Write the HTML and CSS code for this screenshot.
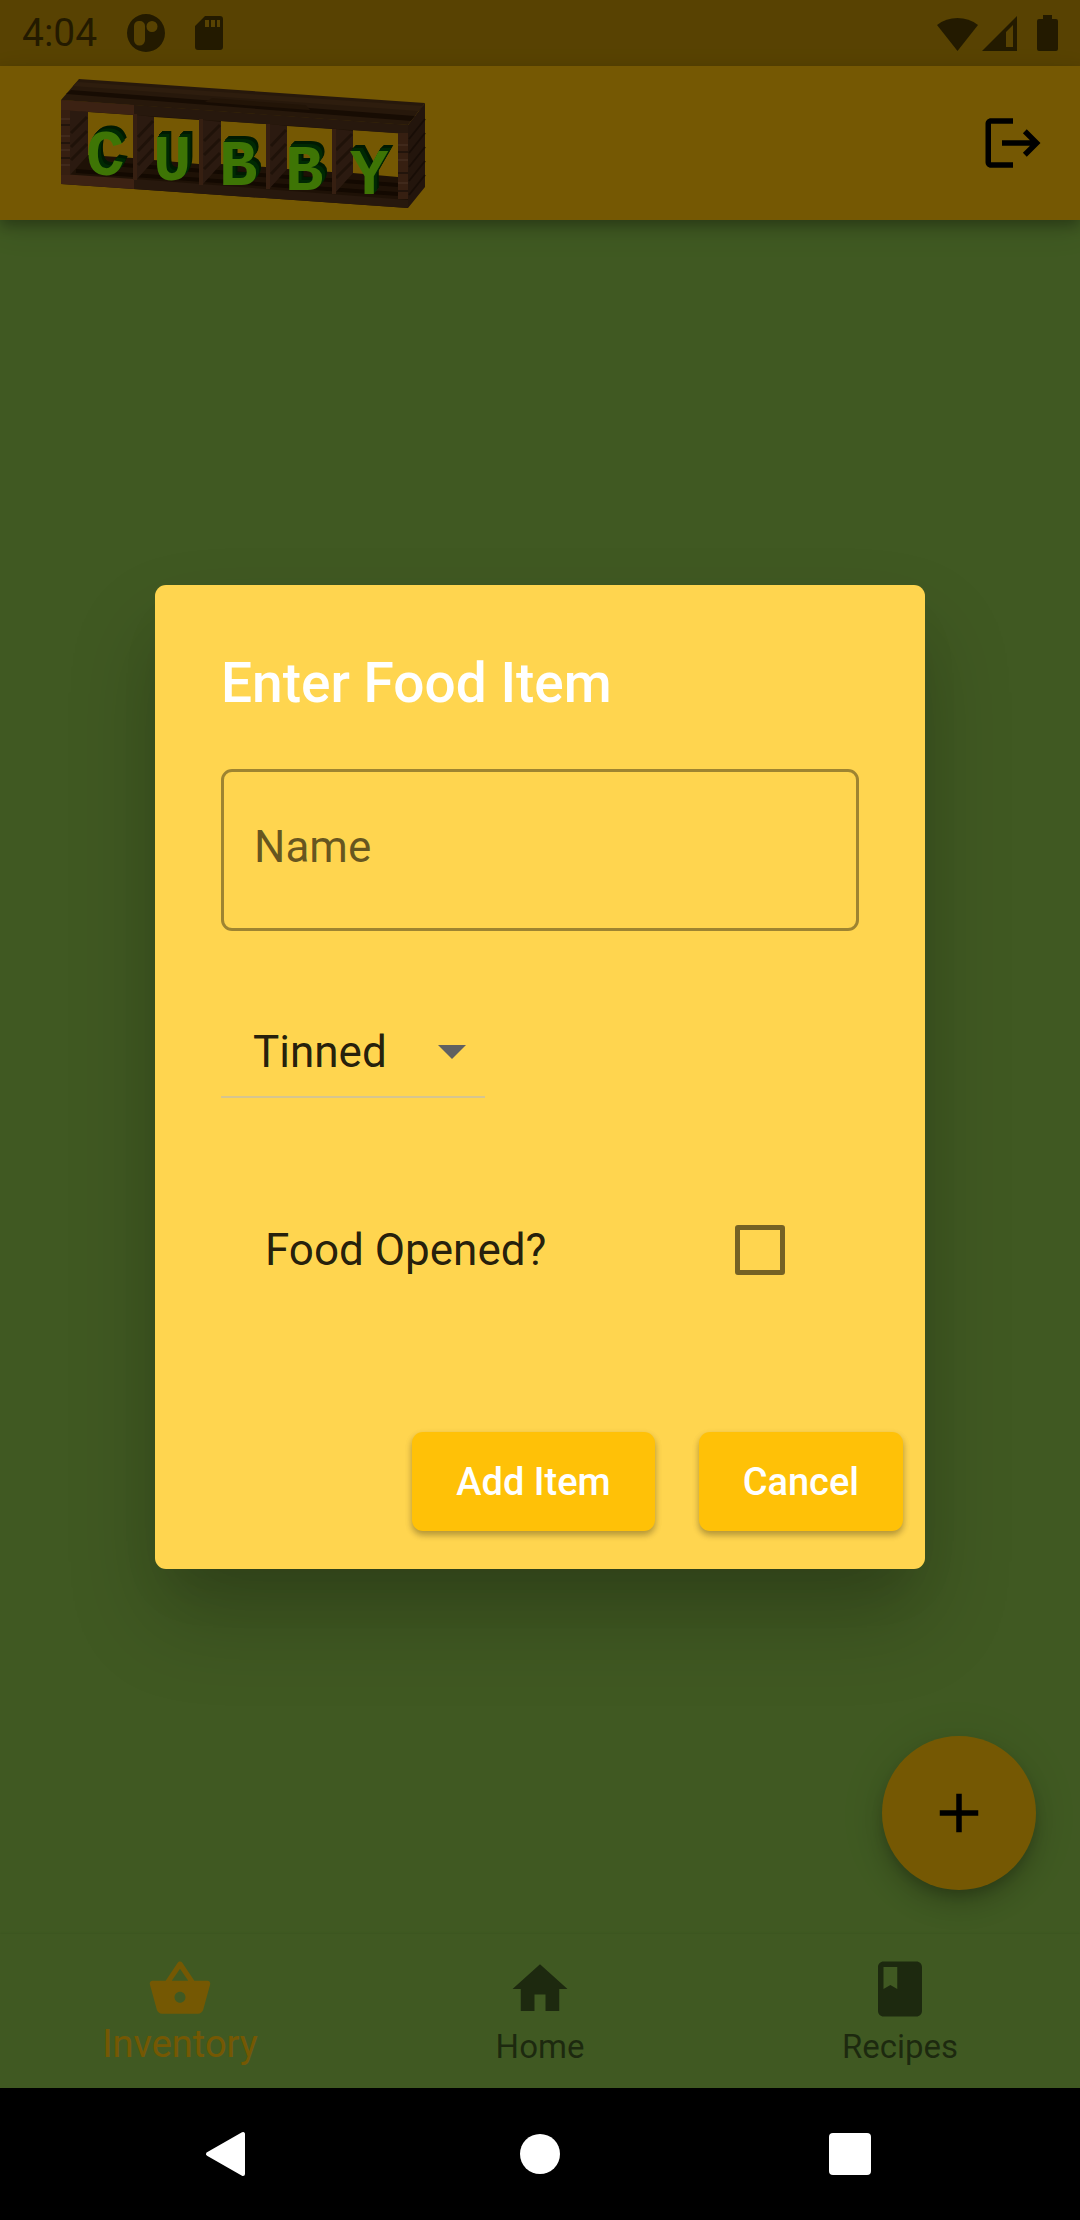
FILE: index.html
```html
<!DOCTYPE html>
<html lang="en">
<head>
<meta charset="utf-8">
<meta name="viewport" content="width=device-width, initial-scale=1">
<title>Cubby</title>
<link rel="stylesheet" href="styles.css">
</head>
<body>
<div class="app">
  <div class="status">
    <div class="status-group">
      <span class="clock">4:04</span>
      <svg class="status-icon" width="38" height="38" viewBox="0 0 38 38" aria-hidden="true"><path fill-rule="evenodd" d="M19 0a19 19 0 1 0 0 38 19 19 0 0 0 0-38zM13 7a5 5 0 0 1 5 5v14a5 5 0 0 1-11 0V12a5 5 0 0 1 6-5zM25 7a5 5 0 1 1 0 11 5 5 0 0 1 0-11z"/></svg>
      <svg class="status-icon" width="28" height="34" viewBox="0 0 28 34" aria-hidden="true"><path fill-rule="evenodd" d="M10 0h15a3 3 0 0 1 3 3v28a3 3 0 0 1-3 3H3a3 3 0 0 1-3-3V10zM10 4v7h4V4zM16 4v7h4V4zM22 4v7h3V4z"/></svg>
    </div>
    <div class="status-group status-right">
      <svg width="41" height="35" viewBox="0 0 41 35" aria-hidden="true"><path d="M0 9a34 34 0 0 1 41 0L20.500 35z"/></svg>
      <svg width="35" height="35" viewBox="0 0 35 35" aria-hidden="true"><path fill-rule="evenodd" d="M0 35 35 0v35zM24 16v15h7V9z"/></svg>
      <svg class="battery" width="21" height="36" viewBox="0 0 21 36" aria-hidden="true"><path d="M6 0h9v4h4a2 2 0 0 1 2 2v28a2 2 0 0 1-2 2H2a2 2 0 0 1-2-2V6a2 2 0 0 1 2-2h4z"/></svg>
    </div>
  </div>

  <header class="appbar">
    <svg class="logo" width="366" height="132" viewBox="60 78 366 132" role="img" aria-label="Cubby">
      <!-- shelf box: top, floor and back openings -->
      <path fill="#56361a" d="M79 80 425 104 408 126 61 101z"/>
      <path fill="#64401f" d="M77 83 423 107 419 112 73 87z"/>
      <path fill="#341b08" d="M71 91 415 117 411 122 66 95z"/>
      <path fill="#4b2c11" d="M205 103 310 111 306 106 212 99z"/>
      <path fill="#43270f" fill-rule="evenodd" d="M61 101 408 126V209L61 185zM88 113V156l45 3v-43zM154 118v43l45 4v-44zM221 122v43l45 3v-43zM287 127v43l45 3v-43zM353 131v43l45 4v-44z"/>
      <path stroke="#2a1403" stroke-width="4" d="M76 172 398 195M96 164l302 22"/>
      <!-- inner side walls -->
      <g fill="#5f3a24">
        <path d="M70 111 88 113V156L70 176zM137 116l17 2v43l-17 19zM203 121l18 2v42l-18 20zM270 125l17 2v43l-17 19zM335 130l18 2v42l-18 20z"/>
      </g>
      <g stroke="#452815" stroke-width="3">
        <path d="M71 134 87 118M71 148 87 132M71 161 87 145M138 138l15-16M138 152l15-16M138 166l15-16M204 142l16-16M204 156l16-16M204 170l16-16M271 147l15-16M271 161l15-16M271 175l15-16M336 151l16-16M336 165l16-16M336 179l16-16"/>
      </g>
      <!-- front frame -->
      <path fill="#834b2a" d="M61 101 134 106V116L61 111zM61 175l73 5v10l-73-5z"/>
      <path fill="#55351d" d="M134 106 408 126V135L134 116zM134 180l274 21v8l-274-19z"/>
      <path fill="#764526" d="M61 111h9v65h-9zM133 115h4v66h-4zM199 120h4v66h-4zM266 125h4v65h-4zM332 130h4v65h-4zM398 134h10v66h-10z"/>
      <path stroke="#8c5a3c" stroke-width="2" d="M61 120h9M61 137h9M61 151h9M61 166h9M398 146h10M398 161h10M398 184h10"/>
      <path stroke="#4a2d18" stroke-width="2" d="M61 126h9M61 144h9M61 159h9M398 153h10M398 174h10M398 192h10"/>
      <path fill="#4c2e1c" d="M408 126 425 104V188L408 209z"/>
      <path stroke="#361e0e" stroke-width="2" d="M409 140 425 120M409 154l16-20M409 168l16-20M409 182l16-20M409 196l16-20"/>
      <g class="logo-letters">
        <text x="86" y="176">C</text>
        <text x="153" y="181">U</text>
        <text x="219" y="186">B</text>
        <text x="285" y="191">B</text>
        <text x="350" y="195">Y</text>
      </g>
    </svg>
    <button class="icon-button" type="button" aria-label="Log out">
      <svg width="66" height="66" viewBox="0 0 24 24"><path d="M17 7l-1.410 1.410L18.170 11H8v2h10.170l-2.580 2.580L17 17l5-5zM4 5h8V3H4c-1.100 0-2 .9-2 2v14c0 1.100.9 2 2 2h8v-2H4z"/></svg>
    </button>
  </header>

  <main class="content">
    <button class="fab" type="button" aria-label="Add food item">
      <svg width="66" height="66" viewBox="0 0 24 24"><path d="M19 13h-6v6h-2v-6H5v-2h6V5h2v6h6z"/></svg>
    </button>
  </main>

  <nav class="tabs">
    <a class="tab tab-active" href="#inventory">
      <svg width="66" height="66" viewBox="0 0 24 24"><path d="M17.210 9l-4.380-6.560c-.19-.28-.51-.42-.83-.42-.32 0-.64.14-.83.43L6.790 9H2c-.55 0-1 .45-1 1 0 .09.010.18.040.27l2.540 9.270c.23.84 1 1.460 1.920 1.460h13c.92 0 1.690-.62 1.930-1.460l2.540-9.270L23 10c0-.55-.45-1-1-1h-4.790zM9 9l3-4.400L15 9H9zm3 8c-1.100 0-2-.9-2-2s.9-2 2-2 2 .9 2 2-.9 2-2 2z"/></svg>
      <span>Inventory</span>
    </a>
    <a class="tab" href="#home">
      <svg width="66" height="66" viewBox="0 0 24 24"><path d="M10 20v-6h4v6h5v-8h3L12 3 2 12h3v8z"/></svg>
      <span>Home</span>
    </a>
    <a class="tab" href="#recipes">
      <svg width="66" height="66" viewBox="0 0 24 24"><path d="M18 2H6c-1.100 0-2 .9-2 2v16c0 1.100.9 2 2 2h12c1.100 0 2-.9 2-2V4c0-1.100-.9-2-2-2zM6 4h5v8l-2.500-1.500L6 12V4z"/></svg>
      <span>Recipes</span>
    </a>
  </nav>

  <div class="scrim">
    <form class="dialog" role="dialog" aria-labelledby="dialog-title">
      <h1 class="dialog-title" id="dialog-title">Enter Food Item</h1>
      <input class="field" type="text" placeholder="Name" aria-label="Name">
      <div class="dropdown">
        <select aria-label="Storage type">
          <option>Tinned</option>
          <option>Fresh</option>
          <option>Frozen</option>
        </select>
        <svg width="28" height="14" viewBox="0 0 28 14" aria-hidden="true"><path d="M0 0h28L14 14z"/></svg>
      </div>
      <div class="check-row">
        <label for="opened">Food Opened?</label>
        <input type="checkbox" id="opened">
      </div>
      <div class="actions">
        <button class="raised" type="button">Add Item</button>
        <button class="raised" type="button">Cancel</button>
      </div>
    </form>
  </div>
</div>

<div class="system-nav">
  <button type="button" aria-label="Back"><svg width="48" height="48" viewBox="0 0 48 48"><path stroke="#fff" stroke-width="4" stroke-linejoin="round" d="M37 4v40L2 24z"/></svg></button>
  <button type="button" aria-label="Home"><svg width="40" height="40" viewBox="0 0 40 40"><circle cx="20" cy="20" r="20"/></svg></button>
  <button type="button" aria-label="Overview"><svg width="42" height="42" viewBox="0 0 42 42"><rect width="42" height="42" rx="4"/></svg></button>
</div>
</body>
</html>
```
FILE: styles.css
```css
* {
  box-sizing: border-box;
}

body {
  margin: 0;
  min-height: 100vh;
  display: flex;
  flex-direction: column;
  background: #000;
  font-family: Roboto, "Noto Sans", sans-serif;
  color: rgba(0, 0, 0, 0.87);
}

svg {
  display: block;
  overflow: visible;
}

button {
  border: 0;
  padding: 0;
  background: none;
  font: inherit;
  display: grid;
  place-items: center;
}

.app {
  position: relative;
  flex: 1;
  display: flex;
  flex-direction: column;
  background: #8bc34a;
}

.status {
  height: 66px;
  padding: 0 22px;
  display: flex;
  align-items: center;
  justify-content: space-between;
  background: #bf9105;
  color: rgba(0, 0, 0, 0.6);
}

.status svg {
  fill: rgba(0, 0, 0, 0.6);
}

.status-group {
  display: flex;
  align-items: center;
}

.clock {
  font-size: 39px;
  line-height: 44px;
}

.status-icon {
  margin-left: 30px;
}

.status-right {
  gap: 4px;
}

.battery {
  margin-left: 16px;
}

.appbar {
  z-index: 1;
  height: 154px;
  padding: 0 34px 0 60px;
  display: flex;
  align-items: center;
  justify-content: space-between;
  background: #ffc107;
  box-shadow: 0 6px 12px rgba(0, 0, 0, 0.25), 0 10px 28px rgba(0, 0, 0, 0.12);
}

.logo-letters {
  font: 700 64px "Liberation Mono", monospace;
  fill: #88ff0d;
  filter: drop-shadow(1px -1px 0 #005b08) drop-shadow(2px -2px 0 #005b08) drop-shadow(2px -3px 0 #003a05);
}

.content {
  flex: 1;
  display: flex;
  align-items: flex-end;
  justify-content: flex-end;
  padding: 44px;
}

.fab {
  width: 154px;
  height: 154px;
  border-radius: 50%;
  background: #ffc107;
  box-shadow: 0 8px 14px -3px rgba(0, 0, 0, 0.2), 0 16px 28px rgba(0, 0, 0, 0.14), 0 3px 50px rgba(0, 0, 0, 0.08);
}

.tabs {
  height: 154px;
  display: grid;
  grid-template-columns: repeat(3, 1fr);
  background: #8bc34a;
  box-shadow: 0 -1px 2px rgba(0, 0, 0, 0.06);
}

.tab {
  padding-top: 22px;
  display: flex;
  flex-direction: column;
  align-items: center;
  color: rgba(0, 0, 0, 0.54);
  fill: currentColor;
  font-size: 33px;
  line-height: 50px;
  text-decoration: none;
}

.tab-active {
  color: #ffc107;
  font-size: 38px;
  line-height: 44px;
}

.scrim {
  position: absolute;
  inset: 0;
  z-index: 2;
  padding: 66px 155px 0;
  display: grid;
  align-items: center;
  background: rgba(0, 0, 0, 0.54);
}

.dialog {
  padding: 66px 22px 38px 66px;
  border-radius: 11px;
  background: #ffd54f;
  box-shadow: 0 30px 50px -19px rgba(0, 0, 0, 0.12), 0 50px 90px rgba(0, 0, 0, 0.2);
}

.dialog-title {
  margin: 0 0 54px;
  font-size: 55px;
  font-weight: 500;
  line-height: 64px;
  color: #fff;
}

.field {
  display: block;
  width: calc(100% - 44px);
  height: 162px;
  padding: 0 30px 6px;
  border: 3px solid rgba(0, 0, 0, 0.38);
  border-radius: 11px;
  background: none;
  font: 44px/52px Roboto, sans-serif;
  color: inherit;
}

.field::placeholder {
  color: rgba(0, 0, 0, 0.6);
  opacity: 1;
}

.dropdown {
  width: 264px;
  margin-top: 77px;
  display: grid;
  align-items: center;
  border-bottom: 2px solid #d6c590;
}

.dropdown > * {
  grid-area: 1 / 1;
}

.dropdown select {
  height: 88px;
  padding: 0 0 0 32px;
  border: 0;
  appearance: none;
  background: none;
  font: 44px/52px Roboto, sans-serif;
  color: inherit;
}

.dropdown svg {
  justify-self: end;
  margin-right: 19px;
  fill: #616161;
  pointer-events: none;
}

.check-row {
  height: 132px;
  margin: 86px 118px 0 44px;
  display: flex;
  align-items: center;
  justify-content: space-between;
  font-size: 44px;
  line-height: 52px;
}

.check-row input {
  width: 50px;
  height: 50px;
  margin: 0;
  appearance: none;
  border: 5px solid rgba(0, 0, 0, 0.54);
  border-radius: 3px;
}

.actions {
  margin-top: 116px;
  display: flex;
  justify-content: flex-end;
  gap: 44px;
}

.raised {
  height: 99px;
  padding: 0 44px;
  border-radius: 11px;
  background: #ffc107;
  color: #fff;
  font-size: 38px;
  font-weight: 500;
  line-height: 44px;
  box-shadow: 0 4px 6px rgba(0, 0, 0, 0.25), 0 3px 8px rgba(0, 0, 0, 0.08);
}

.system-nav {
  height: 132px;
  padding: 0 7%;
  display: grid;
  grid-template-columns: repeat(3, 1fr);
  fill: #fff;
}
```
